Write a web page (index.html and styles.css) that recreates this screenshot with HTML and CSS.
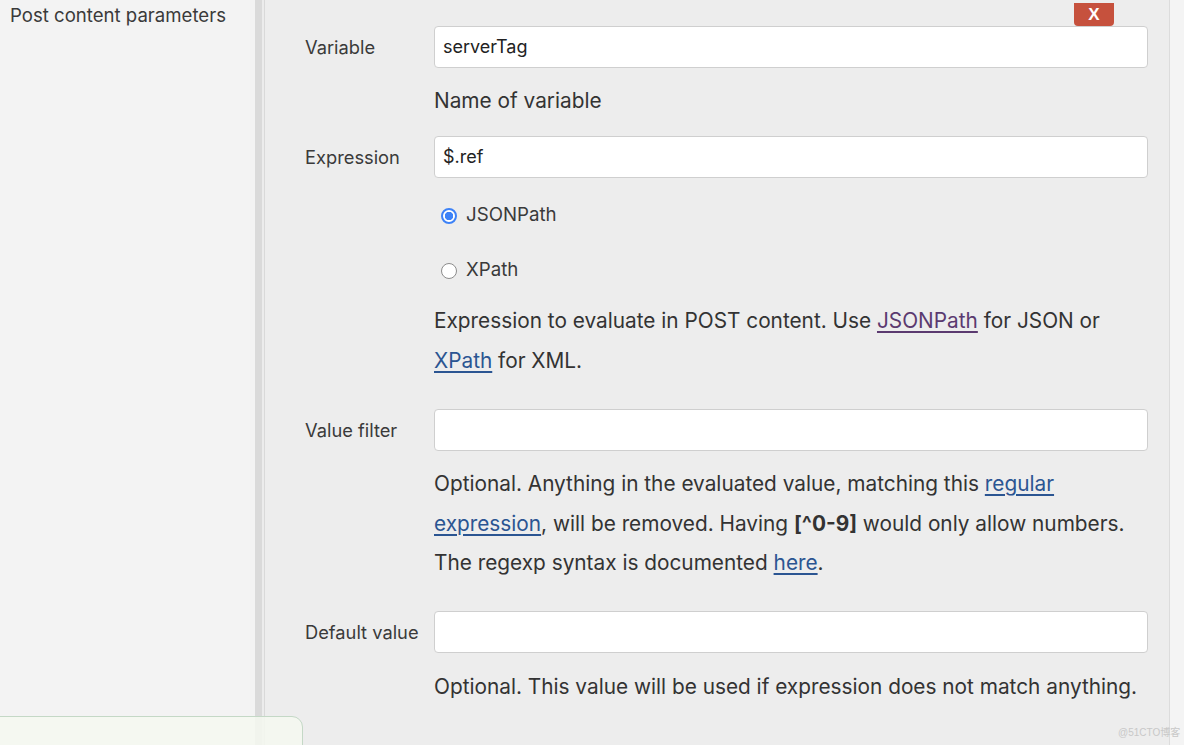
FILE: index.html
```html
<!DOCTYPE html>
<html>
<head>
<meta charset="utf-8">
<link rel="stylesheet" href="styles.css">
</head>
<body>
<div class="page">
  <aside class="sidebar">
    <div class="side-title">Post content parameters</div>
  </aside>
  <div class="divider"><span class="bar"></span><span class="gap"></span><span class="line"></span></div>
  <main class="main">
    <button class="remove">X</button>

    <div class="row row-variable">
      <label class="label">Variable</label>
      <div class="input">serverTag</div>
    </div>
    <div class="help help-variable">Name of variable</div>

    <div class="row row-expression">
      <label class="label">Expression</label>
      <div class="input">$.ref</div>
    </div>
    <div class="radio-row radio-first"><span class="radio checked"></span><span>JSONPath</span></div>
    <div class="radio-row radio-second"><span class="radio"></span><span>XPath</span></div>
    <div class="help help-expression">Expression to evaluate in POST content. Use <a class="visited" href="#">JSONPath</a> for JSON or<br><a href="#">XPath</a> for XML.</div>

    <div class="row row-filter">
      <label class="label">Value filter</label>
      <div class="input"></div>
    </div>
    <div class="help help-filter">Optional. Anything in the evaluated value, matching this <a href="#">regular</a><br><a href="#">expression</a>, will be removed. Having <b>[^0-9]</b> would only allow numbers.<br>The regexp syntax is documented <a href="#">here</a>.</div>

    <div class="row row-default">
      <label class="label">Default value</label>
      <div class="input"></div>
    </div>
    <div class="help help-default">Optional. This value will be used if expression does not match anything.</div>
  </main>
  <div class="rightstrip"></div>
  <div class="notice"></div>
  <div class="watermark">@51CTO博客</div>
</div>
</body>
</html>
```
FILE: styles.css
```css
* { box-sizing: border-box; }
html, body { margin: 0; padding: 0; }
body {
  width: 1184px;
  height: 745px;
  overflow: hidden;
  font-family: Inter, "Noto Sans", "Liberation Sans", sans-serif;
  color: #333;
  background: #ededed;
}
.page {
  position: relative;
  display: flex;
  width: 1184px;
  height: 745px;
}
.sidebar {
  width: 255px;
  flex: none;
  background: #f3f3f3;
  padding: 4px 0 0 10px;
}
.side-title {
  font-size: 18.6px;
  line-height: 22px;
  color: #3a3a3a;
}
.divider {
  display: flex;
  flex: none;
  width: 10px;
}
.divider .bar { width: 7px; background: #dadada; }
.divider .gap { width: 2px; background: #ececec; }
.divider .line { width: 1px; background: #d9d9d9; }

.main {
  position: relative;
  width: 905px;
  flex: none;
  background: #ededed;
  border-right: 1px solid #dcdcdc;
  padding: 26px 21px 0 40px;
  display: flex;
  flex-direction: column;
}
.rightstrip {
  flex: 1;
  background: #f4f4f4;
}
.remove {
  position: absolute;
  top: 3px;
  left: 809px;
  width: 40px;
  height: 23px;
  border: none;
  border-radius: 0 0 4px 4px;
  background: #c6513d;
  color: #fff;
  font-family: "Liberation Sans", Arial, sans-serif;
  font-weight: bold;
  font-size: 17px;
  line-height: 23px;
  padding: 0;
}
.row {
  display: flex;
  align-items: center;
}
.label {
  width: 129px;
  flex: none;
  font-size: 18.3px;
  color: #3a3a3a;
}
.input {
  flex: 1;
  height: 42px;
  background: #fff;
  border: 1px solid #cfcfcf;
  border-radius: 4px;
  padding: 0 8px;
  font-size: 18px;
  line-height: 40px;
  color: #222;
}
.help {
  margin-left: 129px;
  font-size: 20.8px;
  line-height: 40px;
  color: #333;
}
.help a { color: #2b5592; text-decoration: underline; text-underline-offset: 3px; }
.help a.visited { color: #5b3a70; }
.help b { font-weight: 700; }

.help-variable { margin-top: 13px; }
.row-expression { margin-top: 15px; }
.radio-row {
  margin-left: 129px;
  height: 40px;
  display: flex;
  align-items: center;
  font-size: 18.7px;
  color: #3a3a3a;
  padding-left: 7px;
}
.radio-first { margin-top: 16px; }
.radio-second { margin-top: 15px; }
.radio {
  width: 16px;
  height: 16px;
  border-radius: 50%;
  border: 1px solid #8c8c8c;
  background: #fff;
  margin-right: 9px;
  margin-top: 3px;
  flex: none;
}
.radio.checked {
  border: 2px solid #3d82f7;
  background: radial-gradient(circle, #3d82f7 0 4px, #fff 4.5px);
}
.help-expression { margin-top: 12px; }
.row-filter { margin-top: 28px; }
.help-filter { margin-top: 13px; line-height: 39.5px; }
.row-default { margin-top: 28px; }
.help-default { margin-top: 14px; }

.notice {
  position: absolute;
  left: -2px;
  top: 716px;
  width: 305px;
  height: 60px;
  border: 1px solid #c4d8c6;
  border-top-right-radius: 11px;
  background: rgba(244, 248, 240, 0.85);
}
.watermark {
  position: absolute;
  left: 1118px;
  top: 727px;
  font-size: 10px;
  line-height: 12px;
  white-space: nowrap;
  color: #c8c8c8;
  font-family: "Liberation Sans", "Noto Sans CJK SC", sans-serif;
}
```
